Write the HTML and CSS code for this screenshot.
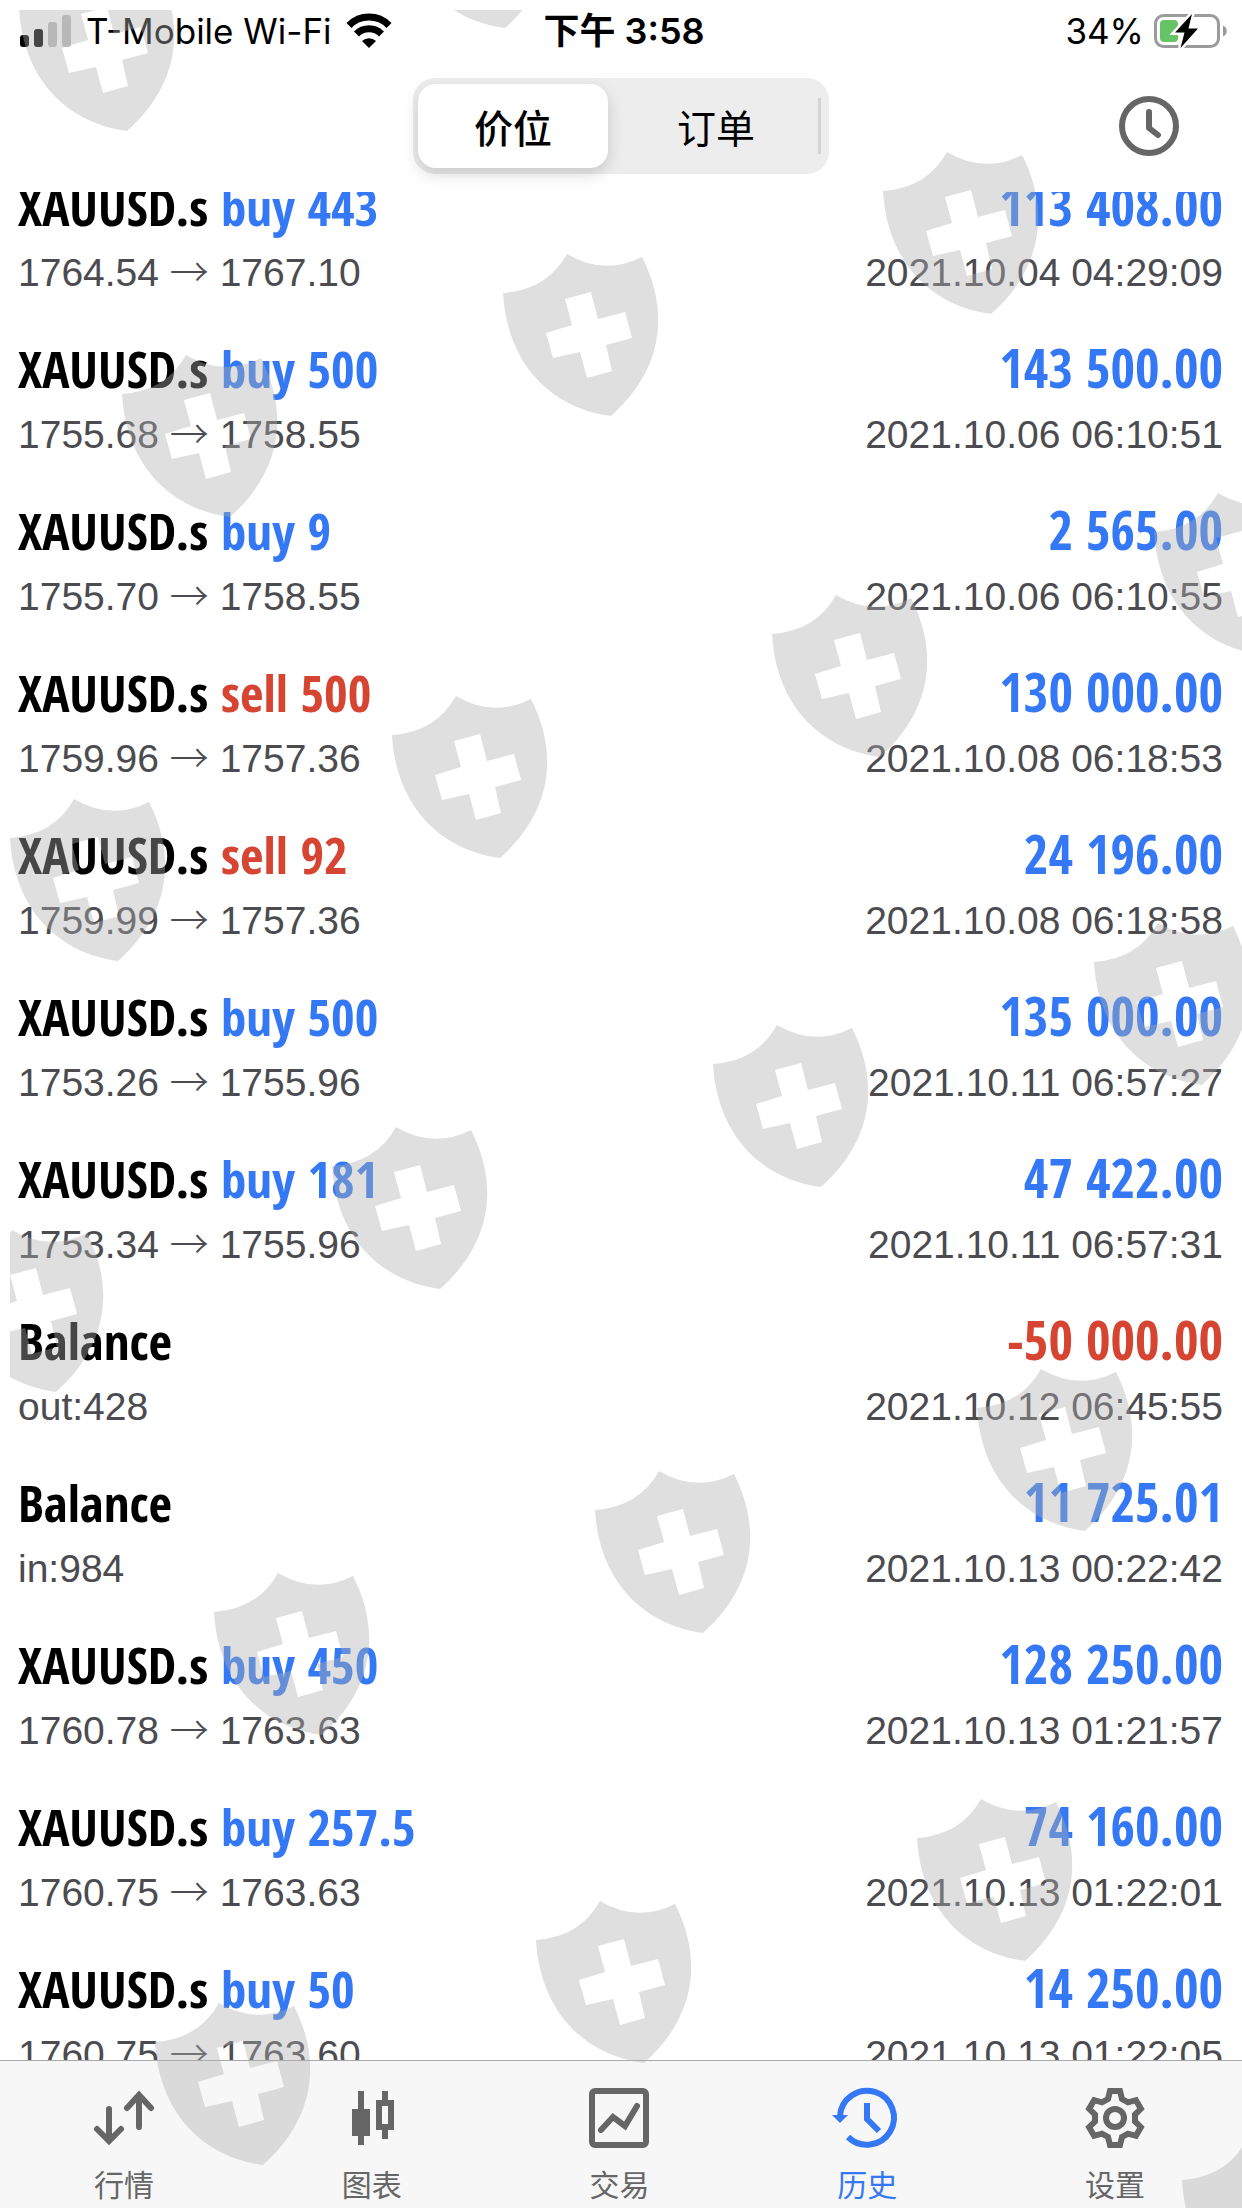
FILE: index.html
```html
<!DOCTYPE html>
<html lang="zh-CN">
<head>
<meta charset="utf-8">
<meta name="viewport" content="width=device-width, initial-scale=1">
<title>历史</title>
<link rel="stylesheet" href="styles.css">
</head>
<body>
<div class="status">
  <div class="status-left">
    <svg class="signal" viewBox="0 0 52 34" width="52" height="34" aria-hidden="true">
      <rect x="0" y="21" width="9" height="12" rx="3"/>
      <rect x="14" y="15" width="9" height="18" rx="3"/>
      <rect x="28" y="8" width="9" height="25" rx="3" opacity=".25"/>
      <rect x="42" y="1" width="9" height="32" rx="3" opacity=".25"/>
    </svg>
    <span>T-Mobile Wi-Fi</span>
    <svg class="wifi" viewBox="0 0 46 34" width="46" height="34" aria-hidden="true">
      <path d="M3 11.500A28 28 0 0 1 43 11.500" fill="none" stroke="#000" stroke-width="7"/>
      <path d="M10.500 20A17.500 17.500 0 0 1 35.500 20" fill="none" stroke="#000" stroke-width="7"/>
      <path d="M23 34L16 27A10 10 0 0 1 30 27Z"/>
    </svg>
  </div>
  <time class="status-time">下午 3:58</time>
  <div class="status-right">
    <span>34%</span>
    <svg viewBox="0 0 74 36" width="74" height="36" aria-hidden="true">
      <rect x="1.500" y="2.500" width="63" height="31" rx="8" fill="none" stroke="#9b9b9e" stroke-width="3"/>
      <path d="M69 12.500C74 14.500 74 21.500 69 23.500Z" fill="#9b9b9e"/>
      <rect x="6" y="7" width="18" height="22" rx="4" fill="#65c466"/>
      <path d="M38 1L21 19.500H30.500L26.500 35L44 15.500H34.500Z" stroke="#fff" stroke-width="5" paint-order="stroke"/>
    </svg>
  </div>
</div>
<header class="toolbar">
  <div class="segments" role="tablist">
    <button class="segment segment-on" type="button" role="tab" aria-selected="true">价位</button>
    <button class="segment segment-off" type="button" role="tab" aria-selected="false">订单</button>
  </div>
  <button class="period" type="button" aria-label="时段">
    <svg viewBox="0 0 60 60" width="60" height="60" fill="none" stroke="#666" stroke-width="6" stroke-linecap="round" stroke-linejoin="round">
      <circle cx="30" cy="30" r="27"/><path d="M30 16V32L39 39"/>
    </svg>
  </button>
</header>
<main class="history">
  <ul class="deals">
    <li class="deal"><strong class="name">XAUUSD.s <span class="buy">buy 443</span></strong><strong class="amount buy">113 408.00</strong><span>1764.54 <i>→</i> 1767.10</span><time>2021.10.04 04:29:09</time></li>
    <li class="deal"><strong class="name">XAUUSD.s <span class="buy">buy 500</span></strong><strong class="amount buy">143 500.00</strong><span>1755.68 <i>→</i> 1758.55</span><time>2021.10.06 06:10:51</time></li>
    <li class="deal"><strong class="name">XAUUSD.s <span class="buy">buy 9</span></strong><strong class="amount buy">2 565.00</strong><span>1755.70 <i>→</i> 1758.55</span><time>2021.10.06 06:10:55</time></li>
    <li class="deal"><strong class="name">XAUUSD.s <span class="sell">sell 500</span></strong><strong class="amount buy">130 000.00</strong><span>1759.96 <i>→</i> 1757.36</span><time>2021.10.08 06:18:53</time></li>
    <li class="deal"><strong class="name">XAUUSD.s <span class="sell">sell 92</span></strong><strong class="amount buy">24 196.00</strong><span>1759.99 <i>→</i> 1757.36</span><time>2021.10.08 06:18:58</time></li>
    <li class="deal"><strong class="name">XAUUSD.s <span class="buy">buy 500</span></strong><strong class="amount buy">135 000.00</strong><span>1753.26 <i>→</i> 1755.96</span><time>2021.10.11 06:57:27</time></li>
    <li class="deal"><strong class="name">XAUUSD.s <span class="buy">buy 181</span></strong><strong class="amount buy">47 422.00</strong><span>1753.34 <i>→</i> 1755.96</span><time>2021.10.11 06:57:31</time></li>
    <li class="deal"><strong class="name">Balance</strong><strong class="amount sell">-50 000.00</strong><span>out:428</span><time>2021.10.12 06:45:55</time></li>
    <li class="deal"><strong class="name">Balance</strong><strong class="amount buy">11 725.01</strong><span>in:984</span><time>2021.10.13 00:22:42</time></li>
    <li class="deal"><strong class="name">XAUUSD.s <span class="buy">buy 450</span></strong><strong class="amount buy">128 250.00</strong><span>1760.78 <i>→</i> 1763.63</span><time>2021.10.13 01:21:57</time></li>
    <li class="deal"><strong class="name">XAUUSD.s <span class="buy">buy 257.5</span></strong><strong class="amount buy">74 160.00</strong><span>1760.75 <i>→</i> 1763.63</span><time>2021.10.13 01:22:01</time></li>
    <li class="deal"><strong class="name">XAUUSD.s <span class="buy">buy 50</span></strong><strong class="amount buy">14 250.00</strong><span>1760.75 <i>→</i> 1763.60</span><time>2021.10.13 01:22:05</time></li>
  </ul>
</main>
<nav class="tabs">
  <a class="tab" href="#quotes">
    <svg viewBox="0 0 60 60" width="60" height="60" fill="none" stroke="currentColor" stroke-width="6" stroke-linecap="round" stroke-linejoin="miter"><path d="M15 21V52M3 41L15 53L27 41M45 39V8M33 20L45 7L57 20"/></svg>
    <span>行情</span>
  </a>
  <a class="tab" href="#charts">
    <svg viewBox="0 0 60 60" width="60" height="60" fill="currentColor"><path d="M16 3H22V21H28V48H22V57H16V48H10V21H16Z"/><path fill-rule="evenodd" d="M40 3H46V12H52V42H46V51H40V42H34V12H40ZM40 18V36H46V18Z"/></svg>
    <span>图表</span>
  </a>
  <a class="tab" href="#trade">
    <svg viewBox="0 0 60 60" width="60" height="60" fill="none" stroke="currentColor" stroke-width="6" stroke-linecap="round"><rect x="3" y="3" width="54" height="54" rx="3"/><path d="M12 42L24 29L36 38L48 18"/></svg>
    <span>交易</span>
  </a>
  <a class="tab tab-on" href="#history" aria-current="page">
    <svg viewBox="0 0 60 60" width="60" height="60" fill="none" stroke="currentColor" stroke-width="6"><path d="M3 28A27 27 0 1 1 11 49"/><path d="M30 15V31L42 43"/><path d="M-5 27H11L3 35Z" fill="currentColor" stroke="none"/></svg>
    <span>历史</span>
  </a>
  <a class="tab" href="#settings">
    <svg viewBox="-30 -30 60 60" width="60" height="60" fill="none" stroke="currentColor" stroke-width="6"><path d="M-7 -19L-5 -27H5L7 -19L13 -15.600L20.900 -17.800L25.900 -9.200L20 -3.400V3.400L25.900 9.200L20.900 17.800L13 15.600L7 19L5 27H-5L-7 19L-13 15.600L-20.900 17.800L-25.900 9.200L-20 3.400V-3.400L-25.900 -9.200L-20.900 -17.800L-13 -15.600Z"/><circle r="9"/></svg>
    <span>设置</span>
  </a>
</nav>
<div class="watermark" aria-hidden="true">
  <svg viewBox="0 0 1242 2208" preserveAspectRatio="xMinYMin slice">
    <defs>
      <clipPath id="frame"><rect x="10" y="10" width="1232" height="2198"/></clipPath>
      <path id="shield" fill-rule="evenodd" d="M0 39Q44 36 64 0Q101 22 139 3C167 58 160 116 108 162C48 154 4 110 0 39ZM62 45L69 71L43 79L50 104L77 98L84 124L109 117L103 91L129 84L122 58L95 65L88 38Z"/>
    </defs>
    <g clip-path="url(#frame)">
      <use href="#shield" x="19" y="-31"/><use href="#shield" x="397" y="-134"/>
      <use href="#shield" x="883" y="152"/><use href="#shield" x="503" y="254"/><use href="#shield" x="122" y="355"/>
      <use href="#shield" x="1154" y="493"/><use href="#shield" x="772" y="595"/><use href="#shield" x="392" y="696"/><use href="#shield" x="10" y="799"/>
      <use href="#shield" x="1094" y="923"/><use href="#shield" x="713" y="1025"/><use href="#shield" x="332" y="1127"/><use href="#shield" x="-52" y="1230"/>
      <use href="#shield" x="977" y="1369"/><use href="#shield" x="595" y="1471"/><use href="#shield" x="214" y="1573"/>
      <use href="#shield" x="917" y="1799"/><use href="#shield" x="536" y="1901"/><use href="#shield" x="155" y="2003"/>
      <use href="#shield" x="1182" y="2141"/>
    </g>
  </svg>
</div>
</body>
</html>
```
FILE: styles.css
```css
* {
  box-sizing: border-box;
}

body {
  position: relative;
  display: flex;
  flex-direction: column;
  height: 100vh;
  margin: 0;
  overflow: hidden;
  background: #fff;
  color: #000;
  font-family: "Liberation Sans", "Noto Sans CJK SC", sans-serif;
}

button {
  padding: 0;
  border: 0;
  background: none;
  color: inherit;
  font: inherit;
}

svg {
  display: block;
  overflow: visible;
}

.status {
  display: grid;
  grid-template-columns: 1fr auto 1fr;
  align-items: center;
  height: 62px;
  padding: 0 14px 0 20px;
  font: 35px/40px Inter, "Noto Sans CJK SC", sans-serif;
}

.status-left,
.status-right {
  display: flex;
  align-items: center;
  gap: 14px;
}

.status-right {
  justify-content: flex-end;
  gap: 10px;
}

.status-time {
  font-size: 36px;
  font-weight: 600;
}

.toolbar {
  display: grid;
  grid-template-columns: 1fr 416px 1fr;
  align-items: center;
  height: 130px;
  padding: 0 63px 2px;
}

.segments {
  grid-column: 2;
  display: grid;
  grid-template-columns: 190px 1fr;
  height: 96px;
  padding: 6px 8px 6px 5px;
  border-radius: 22px;
  background: #ededed;
  font-size: 39px;
}

.segment-on {
  border-radius: 18px;
  background: #fff;
  box-shadow: 0 6px 16px rgba(0, 0, 0, .16);
  font-weight: 500;
}

.segment-off {
  height: 56px;
  align-self: center;
  padding-left: 6px;
  border-right: 3px solid #d4d4d6;
}

.period {
  justify-self: end;
}

.history {
  flex: 1;
  min-height: 0;
  overflow: hidden;
}

.deals {
  margin: -16px 0 0;
  padding: 0 19px 0 18px;
  list-style: none;
}

.deal {
  display: grid;
  grid-template-columns: 1fr auto;
  grid-template-rows: 67px 95px;
  color: #4b4b50;
  font-size: 39px;
  line-height: 60px;
}

.deal i {
  font: 300 39px/40px "Noto Sans CJK SC", sans-serif;
}

.deal time {
  text-align: right;
}

.name,
.amount {
  font-family: "Avenir Next Condensed", "Open Sans Condensed", "Liberation Sans Narrow", sans-serif;
  font-size: 51px;
}

.name {
  color: #000;
}

.amount {
  font-size: 53px;
  text-align: right;
}

.buy {
  color: #3478f6;
}

.sell {
  color: #d64432;
}

.tabs {
  display: grid;
  grid-template-columns: repeat(5, 1fr);
  height: 148px;
  padding-right: 3px;
  border-top: 1px solid #a9a9ab;
  background: #f7f7f7;
}

.tab {
  display: flex;
  flex-direction: column;
  align-items: center;
  gap: 18px;
  padding-top: 27px;
  color: #666;
  font-size: 30px;
  line-height: 40px;
  text-decoration: none;
}

.tab-on {
  color: #3478f6;
}

.watermark {
  position: absolute;
  inset: 0;
  overflow: hidden;
  pointer-events: none;
}

.watermark svg {
  width: 100%;
  height: 100%;
  fill: rgba(175, 175, 175, .4);
}
```
